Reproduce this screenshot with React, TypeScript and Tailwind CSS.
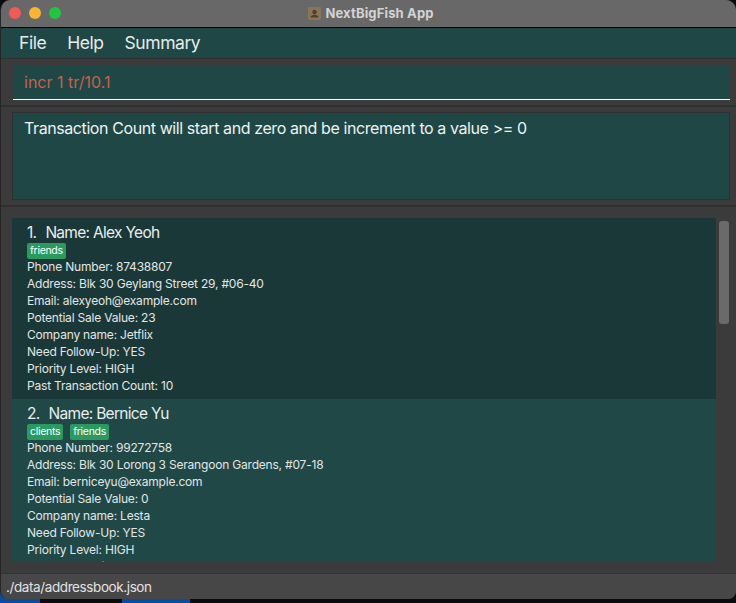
const fontFamily = 'Inter, "Noto Sans", sans-serif';

interface Person {
  index: number;
  name: string;
  tags: string[];
  phone: string;
  address: string;
  email: string;
  saleValue: string;
  company: string;
  priority: string;
  count: string;
}

const people: Person[] = [
  {
    index: 1,
    name: 'Alex Yeoh',
    tags: ['friends'],
    phone: '87438807',
    address: 'Blk 30 Geylang Street 29, #06-40',
    email: 'alexyeoh@example.com',
    saleValue: '23',
    company: 'Jetflix',
    priority: 'HIGH',
    count: '10',
  },
  {
    index: 2,
    name: 'Bernice Yu',
    tags: ['clients', 'friends'],
    phone: '99272758',
    address: 'Blk 30 Lorong 3 Serangoon Gardens, #07-18',
    email: 'berniceyu@example.com',
    saleValue: '0',
    company: 'Lesta',
    priority: 'HIGH',
    count: '0',
  },
];

function PersonCard({ person, dark }: { person: Person; dark: boolean }) {
  const lines = [
    `Phone Number: ${person.phone}`,
    `Address: ${person.address}`,
    `Email: ${person.email}`,
    `Potential Sale Value: ${person.saleValue}`,
    `Company name: ${person.company}`,
    'Need Follow-Up: YES',
    `Priority Level: ${person.priority}`,
    `Past Transaction Count: ${person.count}`,
  ];

  return (
    <div className={`h-[181px] shrink-0 pl-[15px] pt-[5px] ${dark ? 'bg-[#1a3837]' : 'bg-[#204846]'}`}>
      <p className="h-[19px] text-[15.5px] leading-[19px] tracking-[-0.7px] text-[#e8eeed]">
        {person.index}.<span className="ml-[9px]">Name: {person.name}</span>
      </p>
      <div className="flex h-[16px] gap-[7px]">
        {person.tags.map((tag) => (
          <span
            key={tag}
            className="mt-[1px] h-[16px] rounded-[2px] bg-[#2b9a5f] px-[3px] text-[10.5px] leading-[16px] tracking-[-0.3px] text-white"
          >
            {tag}
          </span>
        ))}
      </div>
      {lines.map((line) => (
        <p key={line} className="h-[17px] text-[12px] leading-[17px] tracking-[-0.2px] text-[#e2e6e5]">
          {line}
        </p>
      ))}
    </div>
  );
}

export default function App() {
  return (
    <div
      className="h-[603px] w-[736px] overflow-hidden bg-[#0b0b0d] bg-[linear-gradient(90deg,#0a4d9e_40px,#0b0b0d_40px,#0b0b0d_122px,#0a4d9e_122px,#0a4d9e_190px,#0b0b0d_190px)] bg-[size:100%_20px] bg-bottom bg-no-repeat"
      style={{ fontFamily }}
    >
      <div className="flex h-[599px] flex-col overflow-hidden rounded-t-[10px] rounded-b-[8px] border-l border-[#262626] bg-[#3b3b3b]">
        {/* title bar */}
        <div className="relative flex h-[28px] shrink-0 items-center justify-center border-b border-black bg-[#686868]">
          <div className="absolute left-[8px] top-[7px] flex gap-[8px]">
            <span className="h-[12px] w-[12px] rounded-full bg-[#f25a55]" />
            <span className="h-[12px] w-[12px] rounded-full bg-[#f7b531]" />
            <span className="h-[12px] w-[12px] rounded-full bg-[#1fc63f]" />
          </div>
          <div className="ml-[5px] flex items-center gap-[4px]">
            <svg width="13" height="13" viewBox="0 0 13 13">
              <rect width="13" height="13" rx="1" fill="#8a7656" />
              <circle cx="6.5" cy="5" r="2.2" fill="#4a4032" />
              <path d="M2.5 10.5c0-2 2-2.8 4-2.8s4 .8 4 2.8z" fill="#4a4032" />
            </svg>
            <span className="text-[13px] font-bold leading-none tracking-[0.15px] text-[#d3d3d3]">NextBigFish App</span>
          </div>
        </div>

        {/* menu bar */}
        <div className="flex h-[30px] shrink-0 items-center gap-[21px] bg-[#1f4745] pl-[18px] text-[17.5px] tracking-[-0.45px] text-[#e6eceb]">
          <span>File</span>
          <span>Help</span>
          <span>Summary</span>
        </div>

        {/* command box */}
        <div className="h-[47px] shrink-0 border-t border-[#303030] pl-[12px] pt-[6px]">
          <div className="flex h-[35px] w-[717px] items-center border-b border-white bg-[#1f4745] pl-[11px] text-[16px] tracking-[0px] text-[#c9604a]">
            incr 1 tr/10.1
          </div>
        </div>

        {/* result box */}
        <div className="h-[100px] shrink-0 border-t-2 border-[#303030] pl-[11px] pt-[5px]">
          <div className="h-[88px] w-[718px] border border-[#303030] bg-[#1f4745] pl-[11px] pt-[3px] text-[16px] leading-[24px] tracking-[-0.41px] text-[#eef2f1]">
            Transaction Count will start and zero and be increment to a value &gt;= 0
          </div>
        </div>

        {/* person list */}
        <div className="h-[368px] shrink-0 border-t-2 border-[#303030] pt-[11px]">
          <div className="flex h-[344px] pl-[11px]">
            <div className="flex w-[704px] flex-col overflow-hidden">
              {people.map((person, i) => (
                <PersonCard key={person.index} person={person} dark={i === 0} />
              ))}
            </div>
            <div className="ml-[3px] mt-[3px] h-[103px] w-[10px] rounded-[3px] bg-[#6a6a6a]" />
          </div>
        </div>

        {/* status bar */}
        <div className="flex h-[26px] shrink-0 items-center border-t border-[#333] bg-[#474747] pl-[5px] pt-[1px] text-[13.5px] tracking-[-0.4px] text-[#e2e2e2]">
          ./data/addressbook.json
        </div>
      </div>
    </div>
  );
}
